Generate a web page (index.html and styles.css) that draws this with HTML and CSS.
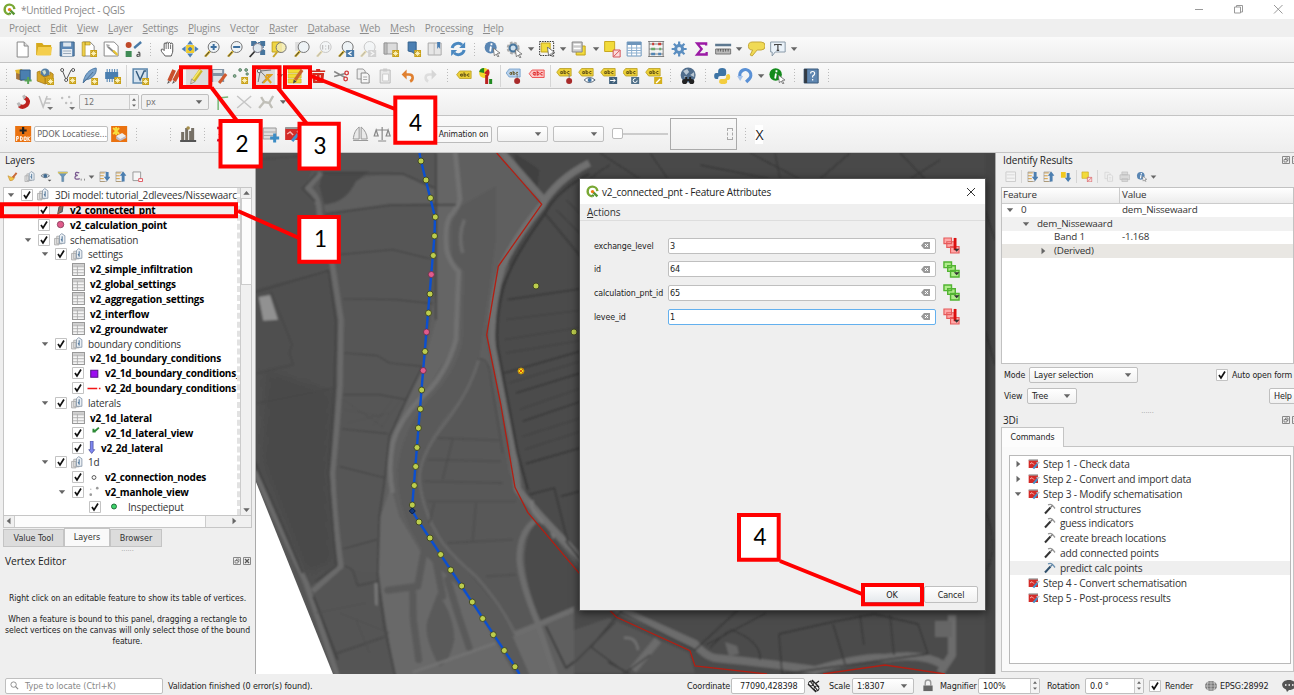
FILE: index.html
```html
<!DOCTYPE html>
<html lang="en">
<head>
<meta charset="utf-8">
<title>*Untitled Project - QGIS</title>
<link rel="stylesheet" href="styles.css">
</head>
<body>
<svg class="sprite" aria-hidden="true">
  <symbol id="qgis" viewBox="0 0 16 16"><path d="M14 7.500A6 6 0 1 0 8 14" fill="none" stroke="#79a834" stroke-width="3"/><path d="M8 14l1-2" stroke="#589632" stroke-width="3"/><path d="M8 8l6 6" stroke="#589632" stroke-width="3"/><circle cx="8" cy="8" r="2" fill="#ee7913"/></symbol>
  <symbol id="star" viewBox="0 0 6 6"><path d="M0 0h6v6H0z" fill="#c8a017"/><path d="M3 .8v4.400M.8 3h4.400M1.400 1.400l3.200 3.200M4.600 1.400L1.400 4.600" stroke="#fff6c4" stroke-width=".8"/></symbol>
  <symbol id="new" viewBox="0 0 18 18"><path d="M4 2h7l4 4v11H4z" fill="#fff" stroke="#888"/><path d="M11 2v4h4" fill="#ddd" stroke="#888"/></symbol>
  <symbol id="open" viewBox="0 0 18 18"><path d="M1 3h6l1.500 2H16v10H1z" fill="#d6a91c"/><path d="M3 7h14l-1.500 8.500H1.500z" fill="#f4ce4d"/></symbol>
  <symbol id="save" viewBox="0 0 18 18"><path d="M2 2h14v14H2z" fill="#5b87b5" stroke="#3f6488"/><path d="M5 2.500h8v4H5z" fill="#dde6ee"/><path d="M4 9h10v7H4z" fill="#e9eef3"/><path d="M5 11h8M5 13.500h8" stroke="#9ab"/></symbol>
  <symbol id="layout" viewBox="0 0 18 18"><path d="M3 2h7l4 4v10H3z" fill="#fff" stroke="#8b8b8b"/><path d="M2 2h3v14H2zM5 2h5v3H5z" fill="#efd04a" stroke="#a88a1b" stroke-width=".6"/><use href="#star" x="10" y="10" width="7" height="7"/></symbol>
  <symbol id="layman" viewBox="0 0 18 18"><path d="M2 2h10l4 4v10H2z" fill="#fff" stroke="#8b8b8b"/><path d="M6 7l8 7" stroke="#888" stroke-width="1.800"/><path d="M4 4l4 1-3 3z" fill="#aaa"/><path d="M10 11l5 5 1-2-4-4z" fill="#e6c231"/></symbol>
  <symbol id="style" viewBox="0 0 18 18"><circle cx="4.500" cy="5" r="3" fill="#c04a2a"/><path d="M1.500 11h6v6h-6z" fill="#3f8b55"/><path d="M10 8l7-6" stroke="#4a7ba8" stroke-width="2.400"/><path d="M13.700 12.500q2-1 2 1V16q-3 1-3-.5t3-1.500" fill="none" stroke="#555" stroke-width="1.200"/></symbol>
  <symbol id="hand" viewBox="0 0 18 18"><path d="M6 16c-2-3-4-4-4-6 0-1.500 2-1 3 .5V4c0-1.500 2-1.500 2 0 0-2.500 2.200-2.500 2.200 0 0-2 2.200-2 2.200 0 .4-1.500 2.200-1.200 2.200.5V11c0 2-1 3-1.500 5z" fill="#fff" stroke="#555"/><path d="M7 4v5M9.200 4v5M11.400 4.500V9" stroke="#555" stroke-width=".8"/></symbol>
  <symbol id="pansel" viewBox="0 0 18 18"><path d="M5 5h8v8H5z" fill="#eecb2f"/><path d="M9 .5l3 4H6zM9 17.500l3-4H6zM.5 9l4-3v6zM17.500 9l-4-3v6z" fill="#4a7fb5"/><path d="M8 7h2v4H8zM7 8h4v2H7z" fill="#4a7fb5"/></symbol>
  <symbol id="lens" viewBox="0 0 18 18"><path d="M7 11l-5 5.500" stroke="#d9b52c" stroke-width="2.500"/><path d="M6 12l-4 4.500" stroke="#333" stroke-width="1"/><circle cx="10.500" cy="7" r="5.500" fill="#eef3f6" stroke="#777"/></symbol>
  <symbol id="zin" viewBox="0 0 18 18"><use href="#lens"/><path d="M7.500 7h6M10.500 4v6" stroke="#3c6f9f" stroke-width="2"/></symbol>
  <symbol id="zout" viewBox="0 0 18 18"><use href="#lens"/><path d="M7 7h7" stroke="#3c6f9f" stroke-width="2"/></symbol>
  <symbol id="zfull" viewBox="0 0 18 18"><path d="M3 1h5v5H3zM12 1h5v5h-5zM12 10h5v5h-5z" fill="#47759d"/><path d="M4 2.500h12M15 3v9" fill="none" stroke="#47759d" stroke-width="1.200" stroke-dasharray="2 1"/><circle cx="9.500" cy="8" r="4.500" fill="#dfe8ee" stroke="#778"/><path d="M6.500 11.500l-5 5.500" stroke="#333" stroke-width="1.800"/></symbol>
  <symbol id="zsel" viewBox="0 0 18 18"><path d="M2 2h9v10H2z" fill="#f0d643" stroke="#c3a31c"/><path d="M7 12l-4 5" stroke="#c8a52a" stroke-width="2"/><circle cx="11" cy="7.500" r="5" fill="#f4ecad" fill-opacity=".85" stroke="#777"/></symbol>
  <symbol id="zlay" viewBox="0 0 18 18"><path d="M2 2h9v9H2z" fill="#ddd"/><use href="#lens"/></symbol>
  <symbol id="znat" viewBox="0 0 18 18"><g opacity=".35"><use href="#lens"/><path d="M7.500 5v4.500M10.500 5.500v1M10.500 8.500v1M13.500 5v4.500" stroke="#555" stroke-width="1.200"/></g></symbol>
  <symbol id="zlast" viewBox="0 0 18 18"><use href="#lens"/><path d="M9 10h8v7H9z" fill="#4a7ba8"/><path d="M14.500 11.500l-3 2 3 2" fill="none" stroke="#fff" stroke-width="1.300"/></symbol>
  <symbol id="znext" viewBox="0 0 18 18"><g opacity=".35"><use href="#lens"/><path d="M9 10h8v7H9z" fill="#999"/><path d="M11.500 11.500l3 2-3 2" fill="none" stroke="#fff" stroke-width="1.300"/></g></symbol>
  <symbol id="newmap" viewBox="0 0 18 18"><path d="M2 3h13v11H2z" fill="#dcdcdc" stroke="#999"/><path d="M2 3h3v11H2z" fill="#bbb" stroke="#888" stroke-width=".6"/><use href="#star" x="10" y="10" width="7" height="7"/></symbol>
  <symbol id="bookm" viewBox="0 0 18 18"><path d="M4 2h8v13l-4-3-4-1z" fill="#4b7fb3" stroke="#33618d"/><use href="#star" x="10" y="10" width="7" height="7"/></symbol>
  <symbol id="bookm2" viewBox="0 0 18 18"><path d="M2 3h13v12H2z" fill="#e6e6e6" stroke="#aaa"/><path d="M8 3v12" stroke="#bbb"/><path d="M11 2h3v7l-1.500-2L11 9z" fill="#4b7fb3"/></symbol>
  <symbol id="refresh" viewBox="0 0 18 18"><path d="M3 8a6 6 0 0 1 10-3M15 10a6 6 0 0 1-10 3" fill="none" stroke="#4a88c0" stroke-width="3"/><path d="M16 2v6h-6zM2 16v-6h6z" fill="#4a88c0"/></symbol>
  <symbol id="cursor" viewBox="0 0 8 8"><path d="M1 0l6 4.500-2.500.3L6 7.500l-1 .4-1.400-2.500L2 7z" fill="#fff" stroke="#666" stroke-width=".7"/></symbol>
  <symbol id="info" viewBox="0 0 18 18"><circle cx="7.500" cy="7.500" r="6" fill="#5a86b3"/><path d="M8.300 3.300v2M7.800 6.500l-.8 5" stroke="#fff" stroke-width="1.800"/><use href="#cursor" x="9" y="8" width="9" height="9"/></symbol>
  <symbol id="act" viewBox="0 0 18 18"><circle cx="8" cy="8" r="5.500" fill="#ccc" stroke="#aaa" stroke-width="2" stroke-dasharray="2.600 1.800"/><circle cx="8" cy="8" r="3.500" fill="#cfe0ee" stroke="#47759d" stroke-width="2"/><use href="#cursor" x="9" y="9" width="9" height="9"/></symbol>
  <symbol id="sel" viewBox="0 0 18 18"><path d="M1.500 1.500h14v14h-14z" fill="none" stroke="#333" stroke-dasharray="1.500 1"/><path d="M3 3h9v9H3z" fill="#f2db3b" stroke="#c3a31c"/><use href="#cursor" x="8" y="7" width="10" height="10"/></symbol>
  <symbol id="selform" viewBox="0 0 18 18"><path d="M6 6h9v9H6z" fill="#f2db3b" stroke="#c3a31c"/><path d="M2 2h10v10H2z" fill="#ccc" stroke="#888"/><path d="M3.500 4.500h7M3.500 8.500h7" stroke="#fff" stroke-width="1.600"/></symbol>
  <symbol id="desel" viewBox="0 0 18 18"><path d="M1.500 1.500h10v10h-10z" fill="#f2db3b" stroke="#c9a91f"/><path d="M10 10h7v7h-7z" fill="#fbdcdc" stroke="#d4555a"/><path d="M10.500 16.500l6-6" stroke="#d4555a"/></symbol>
  <symbol id="table" viewBox="0 0 18 18"><path d="M2 2h14v14H2z" fill="#fff" stroke="#6d95bb"/><path d="M2 2h14v3H2z" fill="#6d95bb"/><path d="M2 8h14M2 10.500h14M2 13h14M6.500 5v11M11.500 5v11" stroke="#8db0d0"/></symbol>
  <symbol id="abacus" viewBox="0 0 18 18"><path d="M2 1v16M16 1v16M2 4h14M2 9h14M2 14h14M1 16.500h16M1 1.500h16" stroke="#777" stroke-width=".9" fill="none"/><path d="M5 4h2M11 4h3" stroke="#cc3b34" stroke-width="2.500"/><path d="M4 9h4M12 9h2" stroke="#69a869" stroke-width="2.500"/><path d="M4 14h4M11 14h3" stroke="#4f84b3" stroke-width="2.500"/></symbol>
  <symbol id="gear" viewBox="0 0 18 18"><path d="M9 1.500v15M1.500 9h15M3.700 3.700l10.600 10.600M14.300 3.700L3.700 14.300" stroke="#5b8ec0" stroke-width="2.200"/><circle cx="9" cy="9" r="5" fill="#5b8ec0"/><circle cx="9" cy="9" r="2" fill="#e8eef4"/></symbol>
  <symbol id="sigma" viewBox="0 0 18 18"><path d="M14 5.500V3.500H5L9.500 9 5 14.500h9.500v-2.500" fill="none" stroke="#9b1aa5" stroke-width="2.300"/></symbol>
  <symbol id="ruler" viewBox="0 0 18 18"><path d="M1 5h16" stroke="#5d7890" stroke-width="2.500"/><path d="M1.500 9h15v5h-15z" fill="#bbb" stroke="#777"/><path d="M4 9v2.500M6.500 9v2.500M9 9v3M11.500 9v2.500M14 9v2.500" stroke="#444" stroke-width=".8"/></symbol>
  <symbol id="tips" viewBox="0 0 18 18"><path d="M5 2h9a3 3 0 0 1 0 8h-4l-5 6-2-1 2.500-5a4 4 0 0 1-.5-8z" fill="#f0da55" stroke="#c5a83c"/></symbol>
  <symbol id="textann" viewBox="0 0 18 18"><path d="M1.500 2h14.500v10H6l-3 4v-4H1.500z" fill="#eaf2f9" stroke="#8a9aa8"/><path d="M5.500 5.500v-1h6.500v1M8.750 4.500v6M7.500 10.300h2.500" fill="none" stroke="#444" stroke-width="1.200"/></symbol>
  <symbol id="dsm" viewBox="0 0 18 18"><path d="M1 3l7-1 1 7-6 1z" fill="#e5b82d"/><path d="M2 6l7 2-1 6-6-2z" fill="#a6743b"/><path d="M6 3h10v10H6z" fill="#4a7fb0" stroke="#325f8b"/><path d="M10.500 13.500h7M14 10v7" stroke="#58a456" stroke-width="2"/></symbol>
  <symbol id="gpkg" viewBox="0 0 18 18"><circle cx="9" cy="6" r="4.500" fill="#557fa5"/><path d="M6 4l3-1 1 3-2 2z" fill="#cfe0cc"/><path d="M1 5l3-1v3l4 3 6-2V5l3 2v7l-8 3-8-3z" fill="#d7a524" stroke="#a57a14" stroke-width=".8"/><path d="M9 11v6" stroke="#a57a14"/><use href="#star" x="11" y="11" width="7" height="7"/></symbol>
  <symbol id="shp" viewBox="0 0 18 18"><path d="M3 3l4 10 5-10h3" fill="none" stroke="#555"/><circle cx="3" cy="3" r="1.500" fill="#fff" stroke="#555"/><circle cx="7" cy="13" r="1.500" fill="#fff" stroke="#555"/><circle cx="14" cy="3" r="1.500" fill="#fff" stroke="#555"/><use href="#star" x="10" y="10" width="7" height="7"/></symbol>
  <symbol id="feather" viewBox="0 0 18 18"><path d="M2 16C3 8 8 2 15 1c1 6-4 11-11 12z" fill="#7ba4cc" stroke="#4d7ba8"/><path d="M2 16L12 5" stroke="#4d6f90"/><use href="#star" x="10" y="11" width="7" height="7"/></symbol>
  <symbol id="chip" viewBox="0 0 18 18"><path d="M2 5h13v7H2z" fill="#4a7fb0"/><path d="M4 2v13M6.500 2v13M9 2v13M11.500 2v13M14 2v9" stroke="#4a7fb0"/><use href="#star" x="11" y="10" width="7" height="7"/></symbol>
  <symbol id="virt" viewBox="0 0 18 18"><path d="M2 2h14v14H2z" fill="#d5e3ef" stroke="#5d88ad" stroke-width="1.500"/><path d="M5 4l4 9 4-9h2" fill="none" stroke="#365d80" stroke-width="1.500"/><use href="#star" x="11" y="11" width="7" height="7"/></symbol>
  <symbol id="pencils" viewBox="0 0 18 18"><path d="M4 14l5-11M9 14l6-11" stroke="#c9502d" stroke-width="4"/><path d="M2 17l1-3 2 1zM7 17l1-3 2 1z" fill="#555"/></symbol>
  <symbol id="pencil" viewBox="0 0 18 18"><path d="M5.500 13.500L13 3" stroke="#cdb729" stroke-width="4"/><path d="M5 12.500L12 3" stroke="#f6e869" stroke-width="1.500"/><path d="M2.500 17l.8-5 3.600 2.600z" fill="#e8d8b0" stroke="#777" stroke-width=".6"/></symbol>
  <symbol id="saveed" viewBox="0 0 18 18"><path d="M1 2h13v13H1z" fill="#8294a5"/><path d="M3 3h9v3H3zM3 9h9v6H3z" fill="#dfe3e7"/><path d="M9 16l7-9" stroke="#d0592e" stroke-width="3"/></symbol>
  <symbol id="addpt" viewBox="0 0 18 18"><g fill="#8fb69a" stroke="#4d7559" stroke-width=".8"><circle cx="2.500" cy="9" r="1.400"/><circle cx="8" cy="3" r="1.400"/><circle cx="14" cy="3" r="1.400"/><circle cx="15" cy="7" r="1.200"/></g><use href="#star" x="9" y="10" width="7" height="7"/></symbol>
  <symbol id="vertex" viewBox="0 0 18 18"><path d="M3 15L5 4l11-1M5 4l8 8" fill="none" stroke="#777"/><circle cx="4" cy="4" r="1.800" fill="#eee" stroke="#666"/><path d="M7 16l7-7" stroke="#777" stroke-width="1.500"/><path d="M10 9l6 7M11 8h5l-8 8" fill="none" stroke="#e0a31f" stroke-width="2"/></symbol>
  <symbol id="multi" viewBox="0 0 18 18"><path d="M1 2h13v4H1zM1 7h13v4H1zM1 12h13v4H1z" fill="#f2dc35" stroke="#c9ad22" stroke-width=".6"/><path d="M8 13l7-10" stroke="#c9662d" stroke-width="3.200"/><path d="M6 16.500l.5-4 3 2z" fill="#444"/></symbol>
  <symbol id="trash" viewBox="0 0 18 18"><path d="M3 6h12l-1 10H4zM2 3.500h14v1.500H2zM7 2h4v2H7z" fill="#d22d20"/><path d="M7 8v6M11 8v6" stroke="#fff"/></symbol>
  <symbol id="cut" viewBox="0 0 18 18"><path d="M2 4.500l11 6M2 9.500l11-3" stroke="#888" stroke-width="1.500"/><circle cx="14.500" cy="6" r="1.800" fill="none" stroke="#d33b3b" stroke-width="1.300"/><circle cx="13.500" cy="12" r="1.800" fill="none" stroke="#d33b3b" stroke-width="1.300"/></symbol>
  <symbol id="copy" viewBox="0 0 18 18"><path d="M3 2h6l2 2v8H3z" fill="#eee" stroke="#999"/><path d="M7 6h6l2 2v8H7z" fill="#f6f6f6" stroke="#888"/><path d="M9 10h4M9 12.500h4" stroke="#aaa"/></symbol>
  <symbol id="paste" viewBox="0 0 18 18"><path d="M4 3h10v13H4z" fill="#e9e9e9" stroke="#bbb"/><path d="M7 1.500h4v3H7z" fill="#ccc"/><path d="M6.500 7h6v7h-6z" fill="#fafafa" stroke="#ccc"/></symbol>
  <symbol id="undo" viewBox="0 0 18 18"><path d="M6 7.500h4c4.500 0 4.500 5 1 7" fill="none" stroke="#e08030" stroke-width="2.600"/><path d="M7.500 2.500v10L2.500 7.500z" fill="#e08030"/></symbol>
  <symbol id="redo" viewBox="0 0 18 18"><path d="M12 7.500H8c-4.500 0-4.500 5-1 7" fill="none" stroke="#ddd" stroke-width="2.600"/><path d="M10.500 2.500v10l5-5z" fill="#d6d6d6"/></symbol>
  <symbol id="abc" viewBox="0 0 12 6"><path d="M3 2v3M3 2.600Q.8 1.500.8 3.500T3 4.500M5 .3V5M5 2.600q2.300-1 2.300 1T5 4.500M11.200 2.300q-2.300-.8-2.300 1.200t2.300 1.200" fill="none" stroke="#5d4d16" stroke-width="1.100"/></symbol>
  <symbol id="tag" viewBox="0 0 18 18"><path d="M4.500 4H16v7.500H4.500L1.500 7.700z" fill="#ecd038" stroke="#b79d20" stroke-width=".8"/><use href="#abc" x="4.500" y="5" width="10.500" height="5.300"/></symbol>
  <symbol id="tagtop" viewBox="0 0 18 18"><use href="#tag" y="-2.500" x="-1"/></symbol>
  <symbol id="diag" viewBox="0 0 18 18"><circle cx="7" cy="6" r="5" fill="#f1d72b"/><path d="M7 6V1a5 5 0 0 0-5 4z" fill="#21881f"/><path d="M7 6l4-4a5 5 0 0 1 0 7z" fill="#c52222"/><path d="M8 8h3v9H8z" fill="#bb2020"/><path d="M12 12h3v5h-3z" fill="#228a22"/></symbol>
  <symbol id="tagb" viewBox="0 0 18 18"><path d="M4 2h11v8H4L1 6z" fill="#b7d1ec" stroke="#6f9cca" stroke-width=".8"/><use href="#abc" x="4" y="3.500" width="9.500" height="5"/><path d="M12 7v6" stroke="#888"/><circle cx="12" cy="14" r="3" fill="#a82a2a"/></symbol>
  <symbol id="tagr" viewBox="0 0 18 18"><path d="M4 3h12v7.500H4L1 6.700z" fill="#fbc6c6" stroke="#e33" stroke-width=".8"/><path d="M7 5v3.500M7 5.500q-2-.8-2 1t2 1.500M9 3.800v4.700M9 5.500q2-.8 2 1T9 8M14.500 5.500q-2-.6-2 1.200t2 1.300" fill="none" stroke="#d22"/></symbol>
  <symbol id="tagpin" viewBox="0 0 18 18"><use href="#tagtop"/><path d="M13 7v6" stroke="#888"/><circle cx="13" cy="14" r="3" fill="#a82a2a"/></symbol>
  <symbol id="tageye" viewBox="0 0 18 18"><use href="#tagtop"/><path d="M6 13q5-5 11 0q-6 5-11 0z" fill="#fff" stroke="#567"/><circle cx="11.500" cy="13" r="2" fill="#3f73a4"/></symbol>
  <symbol id="tagmove" viewBox="0 0 18 18"><use href="#tagtop"/><path d="M9 10h8v7H9z" fill="#3f5f7a"/><path d="M10 13.500h5M13 11.500l2 2-2 2" stroke="#fff" fill="none"/></symbol>
  <symbol id="tagrot" viewBox="0 0 18 18"><use href="#tagtop"/><path d="M9 10h8v7H9z" fill="#4f6f88"/><circle cx="13" cy="13.500" r="2" fill="none" stroke="#fff" stroke-dasharray="9 3"/></symbol>
  <symbol id="taged" viewBox="0 0 18 18"><use href="#tagtop"/><path d="M9 10h8v7H9z" fill="#d4b01d"/><path d="M11 16l4-4" stroke="#fff" stroke-width="1.500"/></symbol>
  <symbol id="globe" viewBox="0 0 18 18"><circle cx="9" cy="8" r="7.500" fill="#506d8c"/><path d="M4 4l4-2 2 3-3 3zM11 8l4-3v5zM5 9l3 1-2 2z" fill="#b8c6d2"/><circle cx="5.500" cy="14.500" r="2.600" fill="#222"/><circle cx="12.500" cy="14.500" r="2.600" fill="#222"/><path d="M6 10h2v4H6zM10 10h2v4h-2zM7 12h4v2H7z" fill="#222"/></symbol>
  <symbol id="python" viewBox="0 0 18 18"><path d="M5 8V4q0-3 4-3t4 3v3q0 2-2 2H7q-2 0-2 2v1H3Q1 12 1 9t2-3h6" fill="#3d74a5"/><path d="M13 8v2q0 2-2 2H8q-2 0-2 2v1q0 2 4 2t4-2v-2h1q2 0 2-3t-2-3z" fill="#f3cd3f"/></symbol>
  <symbol id="reload" viewBox="0 0 18 18"><path d="M4 10A5.500 5.500 0 1 1 13 12l-3 3" fill="none" stroke="#5a91d6" stroke-width="3.200"/><path d="M7 9L1 9l3 5z" fill="#a5c2ea"/></symbol>
  <symbol id="greeni" viewBox="0 0 18 18"><circle cx="7.500" cy="7.500" r="6.200" fill="#138a1b"/><path d="M8.300 3.300v2M7.800 6.500l-.8 5" stroke="#fff" stroke-width="1.800"/><use href="#cursor" x="9" y="8" width="9" height="9"/></symbol>
  <symbol id="help" viewBox="0 0 18 18"><path d="M2 2h14v14H2z" fill="#5f86b0" stroke="#3a5a7c"/><path d="M2 2h3v14H2z" fill="#333b44"/><path d="M8.500 6.500q0-2 2-2t2 2q0 1.500-2 2.500v1.500M10.500 12v1.500" fill="none" stroke="#fff" stroke-width="1.200"/></symbol>
  <symbol id="magnet" viewBox="0 0 18 18"><path d="M5 12.500q3.500 3 7.500-.5 3.500-4.500-2-7.500" fill="none" stroke="#bd2320" stroke-width="4"/><path d="M2.500 10.500l2.500-1.500 2 3-2.500 2zM8 3l2.500-1.500 1.500 3-2.500 2z" fill="#b9b9b9"/></symbol>
  <symbol id="snapv" viewBox="0 0 18 18"><path d="M3 3l4 11 4-11M9 6h6M9 10h5" fill="none" stroke="#c2c2c2" stroke-width="1.500"/><path d="M11 14h6l-3 3z" fill="#777"/></symbol>
  <symbol id="snapp" viewBox="0 0 18 18"><g fill="#c0c0c0"><circle cx="3" cy="5" r="1.200"/><circle cx="7" cy="10" r="1.200"/><circle cx="10" cy="4" r="1.200"/><circle cx="12" cy="10" r="1.200"/></g><path d="M10 14h6l-3 3z" fill="#777"/></symbol>
  <symbol id="topo" viewBox="0 0 18 18"><path d="M5 17V4M5 5l10-1" stroke="#76b877" stroke-width="1.500"/><path d="M2 2l4 4" stroke="#bbb"/></symbol>
  <symbol id="cross" viewBox="0 0 18 18"><path d="M2 3l14 12M16 3L2 15" stroke="#c6c6c6" stroke-width="1.500"/></symbol>
  <symbol id="trace" viewBox="0 0 18 18"><path d="M2 15l5-6-3-5M7 9l5 1 4-7M12 10l3 5" fill="none" stroke="#c0bfb8" stroke-width="2.400"/></symbol>
  <symbol id="pdok" viewBox="0 0 18 18"><path d="M1 1h16v16H1z" fill="#ea7210"/><path d="M9 2v7M5.500 5.500h7" stroke="#222" stroke-width="2.200"/><path d="M2.500 16v-4.500h1.600v2.300H2.800M6.300 11.500v4q2 0 2-2t-2-2M10 12h2v3.500h-2zM13.800 11.500V16M16 11.500l-2 2.200 2 2.300" fill="none" stroke="#fff"/></symbol>
  <symbol id="pdok2" viewBox="0 0 18 18"><path d="M1 1h16v16H1z" fill="#ea7210"/><path d="M3 3l6 6M9 3L3 9M6 2v8" stroke="#f9df3d" stroke-width="1.800"/><path d="M6 11l6-3 4 3-6 4z" fill="#eee"/><path d="M6 11v3l4 2 6-3v-2l-6 3z" fill="#bbc"/></symbol>
  <symbol id="city" viewBox="0 0 18 18"><path d="M2 16V7h3v9M6 16V3h3v13M10 16V6h2V3h3v13z" fill="#767066"/><path d="M1 16h16" stroke="#555" stroke-width="2"/><circle cx="9" cy="3" r="1.800" fill="#a58e4a"/></symbol>
  <symbol id="three" viewBox="0 0 18 18"><path d="M4 3h4q4 0 2.500 4L8 9q5 1 2 5-2 2-6 1" fill="none" stroke="#cf1238" stroke-width="2.600"/></symbol>
  <symbol id="addt" viewBox="0 0 18 18"><path d="M1 3h13v11H1z" fill="#ddd" stroke="#999"/><path d="M1 7h13M1 10.500h13" stroke="#aaa"/><path d="M8 13h9M12.500 8.500v9" stroke="#3b8cc5" stroke-width="3"/></symbol>
  <symbol id="tbox" viewBox="0 0 18 18"><path d="M1 3h14v12H1z" fill="#d32b28"/><path d="M1 2h14v2H1z" fill="#999"/><path d="M3 9l3-2 3 3" stroke="#f8b5b2" fill="none" stroke-width="1.500"/><path d="M8 16l6-7" stroke="#4591c9" stroke-width="3"/><path d="M13 6l2 2 2-2" fill="none" stroke="#b9c4cc" stroke-width="1.800"/></symbol>
  <symbol id="sail" viewBox="0 0 18 18"><path d="M8 2C3 6 3 10 2 14h6zM10 2v12h6c0-4-2-9-6-12zM2 15.500h15" fill="#e9e9e9" stroke="#999"/></symbol>
  <symbol id="scales" viewBox="0 0 18 18"><path d="M9 2v13M5 16h8M3 5h12M3 5l-2 6h4zM15 5l-2 6h4z" fill="#eee" stroke="#888" stroke-width="1.200"/></symbol>
  <symbol id="group" viewBox="0 0 12 12"><path d="M1 5h4v6H1zM3 3h5v7H3z" fill="#e4e4e4" stroke="#aaa" stroke-width=".8"/><path d="M5.500 2.500l2-2 3 2v7h-5z" fill="#edf1f5" stroke="#8496a8" stroke-width=".8"/><path d="M8 3v5M7 5.500l1 2" stroke="#567b9e"/></symbol>
  <symbol id="tbl" viewBox="0 0 12 12"><path d="M.5.500h11v11H.5z" fill="#f5f5f5" stroke="#999"/><path d="M1 1h10v2H1z" fill="#ccc"/><path d="M1 3.500h10M1 6.200h10M1 9h10M5 3v8" stroke="#aaa" stroke-width=".8"/></symbol>
  <symbol id="chk" viewBox="0 0 12 12"><path d="M.5.500h11v11H.5z" fill="#fff" stroke="#c3c3c3"/><path d="M3 6l2 3 4-6.500" fill="none" stroke="#111" stroke-width="1.700"/></symbol>
  <symbol id="dn" viewBox="0 0 8 8"><path d="M.8 2.200h6.400L4 6z" fill="#666"/></symbol>
  <symbol id="rt" viewBox="0 0 8 8"><path d="M2.500.8v6.400L6.300 4z" fill="#666"/></symbol>
  <symbol id="up" viewBox="0 0 8 8"><path d="M.8 5.800h6.400L4 2z" fill="#666"/></symbol>
  <symbol id="brush" viewBox="0 0 12 12"><path d="M1 5q4 3 6 0l1 2q-2 4-5 3z" fill="#f0c648" stroke="#c78a2a" stroke-width=".6"/><path d="M6 7l4-5" stroke="#c96a3b" stroke-width="2"/></symbol>
  <symbol id="eye" viewBox="0 0 12 12"><path d="M1 5q4.500-4 9 0q-4.500 4-9 0z" fill="#dfe6ec" stroke="#78828c"/><circle cx="5.500" cy="5" r="2" fill="#3f6a91"/><path d="M8 9h4l-2 2z" fill="#555"/></symbol>
  <symbol id="funnel" viewBox="0 0 12 12"><path d="M1 1h10L7 6v5H5V6z" fill="#6b97bd" stroke="#4e7592" stroke-width=".5"/><path d="M1 1h10v1.500H1z" fill="#d9c35c"/></symbol>
  <symbol id="eps" viewBox="0 0 12 12"><path d="M5.500 2Q1.500.5 1.500 3q0 1.500 2.500 1.500Q1 4.500 1 7q0 2.500 5 1" fill="none" stroke="#79588f" stroke-width="1.300"/><path d="M7.500 8v2M11 8v2" stroke="#888"/></symbol>
  <symbol id="exp" viewBox="0 0 12 12"><path d="M1 2h5M1 5h4M1 8h4M1 11h5" stroke="#d49a35"/><path d="M1 1h7v10H1z" fill="none" stroke="#999" stroke-width=".7"/><path d="M7 1h3v5h2l-3.500 4.500L5 6h2z" fill="#4c7fb0"/></symbol>
  <symbol id="col" viewBox="0 0 12 12"><path d="M1 2h5M1 5h4M1 8h4M1 11h5" stroke="#d49a35"/><path d="M1 1h7v10H1z" fill="none" stroke="#999" stroke-width=".7"/><path d="M7 11h3V5h2L8.500.5 5 5h2z" fill="#4c7fb0"/></symbol>
  <symbol id="ynew" viewBox="0 0 12 12"><path d="M1 1h5v6H1z" fill="#f0c820"/><path d="M7 2h3v5h2l-3.500 4.500L5 7h2z" fill="#4c7fb0"/></symbol>
  <symbol id="rem" viewBox="0 0 12 12"><path d="M1 1h8v9H1z" fill="#f6f6f6" stroke="#999"/><path d="M7 8h4v3H7z" fill="#fff" stroke="#e0555f"/></symbol>
  <symbol id="form" viewBox="0 0 12 12"><path d="M1 1h10v10H1z" fill="#f3f3f3" stroke="#ccc"/><path d="M2 4h8M2 7.500h8" stroke="#d6d6d6"/></symbol>
  <symbol id="print" viewBox="0 0 12 12"><path d="M1 4h10v5H1zM3 1h6v3H3zM3 8h6v3H3z" fill="#d9d9d9" stroke="#bbb" stroke-width=".7"/></symbol>
  <symbol id="hammer" viewBox="0 0 12 12"><path d="M1 10.500L6.500 4.500" stroke="#333" stroke-width="2"/><path d="M4 1.800Q7.500.5 9 3l2 2.500" fill="none" stroke="#999" stroke-width="1.300"/><path d="M6.500 4.500L8.500 2.500" stroke="#777" stroke-width="1.500"/></symbol>
  <symbol id="hammerb" viewBox="0 0 12 12"><path d="M1 10.500L6.500 4.500" stroke="#2f4f6b" stroke-width="2"/><path d="M4 1.800Q7.500.5 9 3l2 2.500" fill="none" stroke="#6b90b0" stroke-width="1.300"/><path d="M6.500 4.500L8.500 2.500" stroke="#5b80a0" stroke-width="1.500"/></symbol>
  <symbol id="flt" viewBox="0 0 8 8"><path d="M.5.500h7v7h-7z" fill="#eee" stroke="#888"/><path d="M2 3.500h3v2.500H2zM3.500 3.500V2H6v2.500H5" fill="none" stroke="#666" stroke-width=".7"/></symbol>
  <symbol id="cls" viewBox="0 0 8 8"><path d="M.5.500h7v7h-7z" fill="#eee" stroke="#888"/><path d="M2 2l4 4M6 2L2 6" stroke="#555" stroke-width="1.200"/></symbol>
  <symbol id="bksp" viewBox="0 0 9 7"><path d="M3 0h6v7H3L0 3.500z" fill="#999"/><path d="M4 2l3 3M7 2L4 5" stroke="#fff"/></symbol>
  <symbol id="wred" viewBox="0 0 18 18"><path d="M1 1h8v6H1zM4 5h8v6H4zM8 10h9v7H8z" fill="#ffa9a9" stroke="#e65a5a" stroke-width="1.200"/><path d="M12.800 1v13" stroke="#dc1010" stroke-width="3"/><path d="M11.500 12.500h6l-3 3z" fill="#333"/></symbol>
  <symbol id="wgreen" viewBox="0 0 18 18"><path d="M1 1h8v6H1zM5 5h8v6H5zM8 10h9v7H8z" fill="#b0ec8c" stroke="#52b432" stroke-width="1.500"/><path d="M11.500 12h6l-3 3z" fill="#333"/></symbol>
</svg>

<div class="app">
  <header class="titlebar">
    <svg class="logo"><use href="#qgis"/></svg><span class="title">*Untitled Project - QGIS</span>
    <svg class="winctl" viewBox="0 0 100 20"><path d="M10 9.500h8M49.500 7h6v6h-6zM51.500 7V5.500h6V12h-2M89 5l8.500 8.500M97.500 5L89 13.500" fill="none" stroke="#999"/></svg>
  </header>
  <nav class="menubar"><span>Pro<u>j</u>ect</span><span><u>E</u>dit</span><span><u>V</u>iew</span><span><u>L</u>ayer</span><span><u>S</u>ettings</span><span><u>P</u>lugins</span><span>Vect<u>o</u>r</span><span><u>R</u>aster</span><span><u>D</u>atabase</span><span><u>W</u>eb</span><span><u>M</u>esh</span><span>Pro<u>c</u>essing</span><span><u>H</u>elp</span></nav>

  <div class="toolbar t1">
    <svg class="i"><use href="#new"/></svg><svg class="i"><use href="#open"/></svg><svg class="i"><use href="#save"/></svg><svg class="i"><use href="#layout"/></svg><svg class="i"><use href="#layman"/></svg><svg class="i"><use href="#style"/></svg><i class="grip"></i>
    <svg class="i"><use href="#hand"/></svg><svg class="i"><use href="#pansel"/></svg><svg class="i"><use href="#zin"/></svg><svg class="i"><use href="#zout"/></svg><svg class="i"><use href="#zfull"/></svg><svg class="i"><use href="#zsel"/></svg><svg class="i"><use href="#zlay"/></svg><svg class="i"><use href="#znat"/></svg><svg class="i"><use href="#zlast"/></svg><svg class="i"><use href="#znext"/></svg><svg class="i"><use href="#newmap"/></svg><svg class="i"><use href="#bookm"/></svg><svg class="i"><use href="#bookm2"/></svg><svg class="i"><use href="#refresh"/></svg><i class="grip"></i>
    <svg class="i"><use href="#info"/></svg><svg class="i"><use href="#act"/></svg><svg class="dd"><use href="#dn"/></svg><svg class="i"><use href="#sel"/></svg><svg class="dd"><use href="#dn"/></svg><svg class="i"><use href="#selform"/></svg><svg class="dd"><use href="#dn"/></svg><svg class="i"><use href="#desel"/></svg><svg class="i"><use href="#table"/></svg><svg class="i"><use href="#abacus"/></svg><svg class="i"><use href="#gear"/></svg><svg class="i"><use href="#sigma"/></svg><svg class="i"><use href="#ruler"/></svg><svg class="dd"><use href="#dn"/></svg><svg class="i"><use href="#tips"/></svg><svg class="i"><use href="#textann"/></svg><svg class="dd"><use href="#dn"/></svg>
  </div>

  <div class="toolbar t2">
    <i class="grip first"></i><svg class="i"><use href="#dsm"/></svg><svg class="i"><use href="#gpkg"/></svg><svg class="i"><use href="#shp"/></svg><svg class="i"><use href="#feather"/></svg><svg class="i"><use href="#chip"/></svg><i class="sep"></i><svg class="i"><use href="#virt"/></svg><i class="grip"></i>
    <svg class="i"><use href="#pencils"/></svg><svg class="i on"><use href="#pencil"/></svg><svg class="i"><use href="#saveed"/></svg><svg class="i"><use href="#addpt"/></svg><svg class="i on"><use href="#vertex"/></svg><svg class="dd"><use href="#dn"/></svg><svg class="i"><use href="#multi"/></svg><svg class="i"><use href="#trash"/></svg><svg class="i"><use href="#cut"/></svg><svg class="i"><use href="#copy"/></svg><svg class="i"><use href="#paste"/></svg><svg class="i"><use href="#undo"/></svg><svg class="i"><use href="#redo"/></svg><i class="grip"></i>
    <svg class="i"><use href="#tag"/></svg><svg class="i"><use href="#diag"/></svg><i class="sep"></i><svg class="i"><use href="#tagb"/></svg><svg class="i"><use href="#tagr"/></svg><i class="sep"></i><svg class="i"><use href="#tagpin"/></svg><svg class="i"><use href="#tageye"/></svg><svg class="i"><use href="#tagmove"/></svg><svg class="i"><use href="#tagrot"/></svg><svg class="i"><use href="#taged"/></svg><i class="grip"></i>
    <svg class="i"><use href="#globe"/></svg><i class="grip"></i><svg class="i"><use href="#python"/></svg><svg class="i"><use href="#reload"/></svg><svg class="dd"><use href="#dn"/></svg><svg class="i"><use href="#greeni"/></svg><i class="grip"></i><svg class="i"><use href="#help"/></svg><i class="grip"></i>
  </div>

  <div class="toolbar t3">
    <i class="grip first"></i><svg class="i"><use href="#magnet"/></svg><svg class="i"><use href="#snapv"/></svg><svg class="i"><use href="#snapp"/></svg>
    <div class="spin dim w60">12<b><svg><use href="#up"/></svg><svg><use href="#dn"/></svg></b></div><div class="combo dim w68">px<svg><use href="#dn"/></svg></div>
    <svg class="i"><use href="#topo"/></svg><svg class="i"><use href="#cross"/></svg><svg class="i"><use href="#trace"/></svg><svg class="dd"><use href="#dn"/></svg>
  </div>

  <div class="toolbar t4">
    <i class="grip first"></i><svg class="i"><use href="#pdok"/></svg><div class="field pdok">PDOK Locatiese...</div><svg class="i"><use href="#pdok2"/></svg><i class="grip"></i><span class="gap22"></span><i class="grip"></i><svg class="i"><use href="#city"/></svg><i class="grip"></i><svg class="i"><use href="#three"/></svg><span class="gap28"></span><svg class="i"><use href="#addt"/></svg><svg class="i"><use href="#tbox"/></svg><span class="gap44"></span><svg class="i"><use href="#sail"/></svg><svg class="i"><use href="#scales"/></svg>
    <div class="anim">Animation on</div><div class="combo c50"><svg><use href="#dn"/></svg></div><div class="combo c50"><svg><use href="#dn"/></svg></div>
    <div class="slider"><i></i></div><div class="lcd"><i></i></div><i class="grip"></i><span class="bigx">X</span>
  </div>

  <main class="work">
    <aside class="left">
      <h2>Layers</h2>
      <div class="mini"><svg><use href="#brush"/></svg><svg><use href="#group"/></svg><svg><use href="#eye"/></svg><svg><use href="#funnel"/></svg><svg><use href="#eps"/></svg><svg class="s"><use href="#dn"/></svg><svg><use href="#exp"/></svg><svg><use href="#col"/></svg><svg><use href="#rem"/></svg></div>
      <div class="tree">
        <div class="rows">
          <div class="r l0"><svg class="a"><use href="#dn"/></svg><svg class="c"><use href="#chk"/></svg><svg class="g"><use href="#group"/></svg><span>3Di model: tutorial_2dlevees/Nissewaarc</span></div>
          <div class="r l1 cur"><i class="a"></i><svg class="c"><use href="#chk"/></svg><svg class="g" viewBox="0 0 12 12"><path d="M4 10L5 4l4-3-1 7z" fill="#777" stroke="#555"/><path d="M4 10l4-7" stroke="#a5654b"/></svg><b><u>v2_connected_pnt</u></b></div>
          <div class="r l1"><i class="a"></i><svg class="c"><use href="#chk"/></svg><svg class="g" viewBox="0 0 12 12"><circle cx="6.500" cy="6" r="3" fill="#e05b8b" stroke="#7b3450" stroke-width=".7"/></svg><b>v2_calculation_point</b></div>
          <div class="r l1"><svg class="a"><use href="#dn"/></svg><svg class="c"><use href="#chk"/></svg><svg class="g"><use href="#group"/></svg><span>schematisation</span></div>
          <div class="r l2"><svg class="a"><use href="#dn"/></svg><svg class="c"><use href="#chk"/></svg><svg class="g"><use href="#group"/></svg><span>settings</span></div>
          <div class="r l3"><i class="a"></i><svg class="t"><use href="#tbl"/></svg><b>v2_simple_infiltration</b></div>
          <div class="r l3"><i class="a"></i><svg class="t"><use href="#tbl"/></svg><b>v2_global_settings</b></div>
          <div class="r l3"><i class="a"></i><svg class="t"><use href="#tbl"/></svg><b>v2_aggregation_settings</b></div>
          <div class="r l3"><i class="a"></i><svg class="t"><use href="#tbl"/></svg><b>v2_interflow</b></div>
          <div class="r l3"><i class="a"></i><svg class="t"><use href="#tbl"/></svg><b>v2_groundwater</b></div>
          <div class="r l2"><svg class="a"><use href="#dn"/></svg><svg class="c"><use href="#chk"/></svg><svg class="g"><use href="#group"/></svg><span>boundary conditions</span></div>
          <div class="r l3"><i class="a"></i><svg class="t"><use href="#tbl"/></svg><b>v2_1d_boundary_conditions</b></div>
          <div class="r l3"><i class="a"></i><svg class="c"><use href="#chk"/></svg><svg class="g" viewBox="0 0 12 12"><path d="M3 3h6.500v6.500H3z" fill="#9b0cf0" stroke="#56108a"/></svg><b>v2_1d_boundary_conditions_</b></div>
          <div class="r l3"><i class="a"></i><svg class="c"><use href="#chk"/></svg><svg class="g" viewBox="0 0 12 12"><path d="M0 6h9M10.500 6h1.500" stroke="#f21616" stroke-width="1.500"/></svg><b>v2_2d_boundary_conditions</b></div>
          <div class="r l2"><svg class="a"><use href="#dn"/></svg><svg class="c"><use href="#chk"/></svg><svg class="g"><use href="#group"/></svg><span>laterals</span></div>
          <div class="r l3"><i class="a"></i><svg class="t"><use href="#tbl"/></svg><b>v2_1d_lateral</b></div>
          <div class="r l3"><i class="a"></i><svg class="c"><use href="#chk"/></svg><svg class="g" viewBox="0 0 12 12"><path d="M5.500 2.500l0 2.500h2M6.500 5l4-3.500" fill="none" stroke="#2d8a35" stroke-width="1.800"/></svg><b>v2_1d_lateral_view</b></div>
          <div class="r l3 near"><i class="a"></i><svg class="c"><use href="#chk"/></svg><svg class="g" viewBox="0 0 12 12"><path d="M4.500 0h2.500v8h1.500l-2.800 3.500L3 8h1.500z" fill="#7f88f2" stroke="#4a4f9e" stroke-width=".7"/></svg><b>v2_2d_lateral</b></div>
          <div class="r l2"><svg class="a"><use href="#dn"/></svg><svg class="c"><use href="#chk"/></svg><svg class="g"><use href="#group"/></svg><span>1d</span></div>
          <div class="r l3"><i class="a"></i><svg class="c"><use href="#chk"/></svg><svg class="g" viewBox="0 0 12 12"><circle cx="6" cy="6" r="1.800" fill="#fff" stroke="#555" stroke-width=".9"/></svg><b>v2_connection_nodes</b></div>
          <div class="r l3"><svg class="a"><use href="#dn"/></svg><svg class="c"><use href="#chk"/></svg><svg class="g" viewBox="0 0 12 12"><circle cx="3" cy="8" r="1.200" fill="#999"/><circle cx="9" cy="2" r="1.200" fill="#999"/><circle cx="3" cy="3" r=".7" fill="#bbb"/></svg><b>v2_manhole_view</b></div>
          <div class="r l4"><i class="a"></i><svg class="c"><use href="#chk"/></svg><svg class="g wide" viewBox="0 0 12 12"><circle cx="6" cy="6" r="2.300" fill="#3fd36c" stroke="#1d6a35" stroke-width=".9"/></svg><span>Inspectieput</span></div>
        </div>
        <div class="vscroll"><svg><use href="#up"/></svg><i></i><svg><use href="#dn"/></svg></div>
      </div>
      <div class="hscroll"><svg class="flip"><use href="#rt"/></svg><i></i><svg><use href="#rt"/></svg><s></s></div>
      <div class="tabs"><span class="t-a">Value Tool</span><span class="t-b sel">Layers</span><span class="t-c">Browser</span></div>
      <div class="dots">······</div>
      <h2 class="ve">Vertex Editor<svg><use href="#flt"/></svg><svg><use href="#cls"/></svg></h2>
      <div class="vtext"><p>Right click on an editable feature to show its table of vertices.</p><p>When a feature is bound to this panel, dragging a rectangle to<br>select vertices on the canvas will only select those of the bound<br>feature.</p></div>
    </aside>

    <div class="map">
      <svg class="terrain" viewBox="256 153 739 521">
        <defs>
          <filter id="soft" x="0" y="0" width="1" height="1"><feGaussianBlur stdDeviation=".8"/></filter>
          <filter id="haze" x="-.2" y="-.2" width="1.400" height="1.400"><feGaussianBlur stdDeviation="14"/></filter>
        </defs>
        <g filter="url(#soft)" fill="none" stroke-linejoin="round">
          <path d="M250 145h755v540H250z" fill="#575757"/>
          <path d="M500 145h505v540H540z" fill="#4a4a4a"/>
          <g transform="translate(256 153) scale(.33333)">
            <path d="M-20-20H190L150 105 190 180 230 340-20 420z" fill="#515151"/>
            <path d="M-20 415L220 350 245 500 240 700 225 960 245 1240 165 1300-20 960z" fill="#505050"/>
            <path d="M30 650L230 720 215 960 230 1230 150 1260 20 930z" fill="#484848" filter="url(#haze)"/>
            <path d="M165 1310L255 1250 365 1260 420 1586H225z" fill="#555"/>
            <path d="M200 55H340Q300 80 280 120 260 155 205 155L190 100z" fill="#484848"/>
            <path d="M205 155Q270 150 300 85 330 60 440 65L535 105V150L400 155 210 185z" fill="#5e5e5e"/>
            <path d="M540-20H725L855 155 725 340 690 545 775 1000 990 1260V1586H420L365 1250 370 1100 400 850 500 640 540 400 545 190z" fill="#5e5e5e"/>
            <path d="M540-20H600L615 150 570 220 575 300 610 360 605 560 520 700 430 800 500 640 540 500 545 190z" fill="#656565"/>
            <path d="M615 160L590 210 590 320 625 355 620 570Q600 660 520 740 440 830 425 950 425 1080 500 1190 600 1330 700 1450L780 1586H870L775 1440Q700 1300 600 1220 500 1120 490 980 490 900 560 800 650 700 668 620L700 400 720 250V100z" fill="#5a5a5a"/>
            <path d="M670 620Q640 720 560 820 490 910 490 980 500 1080 560 1170L780 1430 840 1410 790 1220 830 1100 760 960 700 640z" fill="#585858"/>
            <path d="M405 1000L370 1100 365 1260 420 1586H790L640 1330 490 1190 430 1090z" fill="#696969"/>
            <path d="M770 1450L850 1420 905 1586H830z" fill="#6a6a6a"/>
            <path d="M505 1190L485 1300 395 1312M470 1310L472 1400 488 1520M535 1200L560 1330M575 1280L605 1380 640 1485" stroke="#5a5a5a" stroke-width="21" stroke-linecap="round"/>
            <path d="M545 1320Q595 1390 595 1460 580 1530 550 1540 500 1450 515 1400z" fill="#5a5a5a"/>
            <path d="M470 1558L720 1470" stroke="#727272" stroke-width="9"/>
            <path d="M597-10L612 140Q605 165 582 190 565 220 572 290 580 330 608 355L600 560Q570 670 490 740 430 800 410 870 395 950 410 1020" stroke="#717171" stroke-width="15"/>
            <path d="M625 200Q605 250 620 300" stroke="#6c6c6c" stroke-width="11"/>
            <path d="M668 620Q640 720 560 820 490 910 490 980 500 1080 560 1170 600 1220 660 1270 740 1360 775 1440" stroke="#686868" stroke-width="8"/>
            <path d="M195 60L155 105Q190 130 190 180L230 340 255 500 252 700Q240 860 230 960 235 1100 255 1240L170 1315M-5 955L150 1290 250 1586" stroke="#6a6a6a" stroke-width="16"/>
            <path d="M-15 900L140 1260M172 1330L245 1520" stroke="#404040" stroke-width="6"/>
            <path d="M183 60L140 106 178 145M-5 418L218 352 240 510 235 700 218 960 240 1240 180 1285M208 183L400 157 600 155M205 60L440 62 535 105M540 0V500M500 640L455 730 400 850 385 990 370 1090 365 1260 385 1420 418 1570" stroke="#434343" stroke-width="6" opacity=".85"/>
            <path d="M0 20L130 10M250 305L410 290 525 318M262 438L420 440 530 452M265 600L365 608 400 630 500 640M262 725L370 725 450 740M258 828L395 842M250 940L388 975M260 1188L362 1160M265 1238L290 1250 305 1298 365 1285M45 415L108 575 100 600 112 635 0 662M0 752L240 705M240 1502L385 1452" stroke="#454545" stroke-width="5" opacity=".75"/>
            <path d="M262 740L385 825M262 770L380 790M275 810L400 780M350 820L410 740M375 825L430 745M180 1380L330 1350M250 1380L400 1440M300 1400L340 1500" stroke="#4f4f4f" stroke-width="3"/>
            <path d="M545 855L730 862M515 920L735 925M505 985L740 990M515 1045L780 1045M575 1170L770 1160M690 1270L780 1265M590 860L560 980M660 1050L650 1165M535 1050L520 1110M665 620Q700 610 705 680L740 900" stroke="#4b4b4b" stroke-width="4"/>
            <path d="M840-20L990-20V50L855 140 735-20z" fill="#494949"/>
            <path d="M775 0L850 50 845 100 835 110 780 45z" fill="#3f3f3f"/>
            <path d="M855 145L990 60V1250L835 1050 780 900 712 560 735 400z" fill="#4b4b4b"/>
            <path d="M860 1110L990 1270V1350L855 1405Q805 1290 805 1210 810 1140 840 1110z" fill="#4b4b4b"/>
            <path d="M735-5L862 140M1000 30Q900 80 855 160 780 250 738 340 705 450 708 560L740 720 768 860 785 1010 850 1085 1000 1245" stroke="#6f6f6f" stroke-width="22"/>
            <path d="M1000 62Q900 115 868 180 765 320 740 410 718 500 724 580L785 900 815 1010" stroke="#383838" stroke-width="8"/>
            <path d="M835 1105Q790 1140 790 1220 795 1290 845 1410L905 1586M775 1445L1000 1350" stroke="#6d6d6d" stroke-width="17"/>
            <path d="M870 185L990 330M755 440L990 405M745 660L990 590M780 720L990 655M800 805L990 740M810 932L990 880M820 1025L895 1005 935 1165M915 1030L990 1010M870 1420L930 1545 990 1500M930 1165L990 1240" stroke="#383838" stroke-width="5"/>
            <path d="M900 170L990 260M930 140L990 200M750 500L990 470M745 560L990 520M750 600L990 560M760 690L990 620M790 770L990 700M800 850L990 790M805 890L990 830" stroke="#424242" stroke-width="4"/>
            <path d="M8 432L42 426 66 500 22 503z" fill="#919191"/>
            <path d="M818 1042h15v22l32 40-6 12-30-36zM882 1138l16 8-6 14zM355 1290l10 0v70l-8-5z" fill="#777"/>
          </g>
          <path d="M574 600l22-8h400v90H574z" fill="#4b4b4b"/>
          <path d="M574 630l35-12 80 35 6 20H574z" fill="#565656"/>
          <path d="M985 153h20v525h-20z" fill="#444"/>
          <path d="M604 600l16 10 75 34q10 12 20 14 60 6 100 12 50-14 70-12 40-6 60 8M952 615v40l-12 18M658 640l-25 30" stroke="#6c6c6c" stroke-width="8"/>
          <path d="M624 638q12-2 14 12" stroke="#727272" stroke-width="2.500"/>
          <path d="M591 647l35-42M591 647l35 26M608 662l22 12M650 655l-28 20M575 662l40-40" stroke="#3d3d3d" stroke-width="1.500"/>
          <path d="M610 165q-18 10-25 20M600 153l40 26M650 153l18 26M700 165l70 14M750 153l50 26M775 153l5 26M820 179l30-26M900 153l25 26M940 160l-30 19M620 612l75 38 45-42M706 645l60-32M710 648q20-20 22-18 30 12 28 30M779 634l53-12 42-8 44 10 10 30-146 20zM833 624l12 40M985 210l10 30M985 330l10 35M985 510q14 35 2 60M860 615l4 30M890 615l4 40" stroke="#363636" stroke-width="1.300"/>
          <path d="M935 621h17v16h-17zM725 642l12 4 2 8-10 2z" fill="#666"/>
        </g>
        <path d="M256 482L333 674H256z" fill="#fff"/>
        <path d="M496.700 153l45 51.300-43.400 62-11.600 68.700 14 69 14.300 83.300 12.700 25 51.600 61 31.400 38 6 6 73.300 33.400 5 15.300 72 8M823 674l62-9 60 9" fill="none" stroke="#b41e12" stroke-width="1.300"/>
        <path d="M419.500 153l1.500 8 14 56-.5 19-13 154-9.200 115v6l6.700 11 96 144.700 4.500 7.300" fill="none" stroke="#0b4fd0" stroke-width="2.400"/>
        <g fill="#bccd4d" stroke="#3c4220" stroke-width=".9"><circle cx="421" cy="161" r="3"/><circle cx="426" cy="180" r="3"/><circle cx="430.500" cy="198" r="3"/><circle cx="435.300" cy="217" r="3"/><circle cx="434.500" cy="236" r="3"/><circle cx="433.300" cy="255.500" r="3"/><circle cx="430" cy="294" r="3"/><circle cx="428.500" cy="313" r="3"/><circle cx="425" cy="351.500" r="3"/><circle cx="421.700" cy="390" r="3"/><circle cx="420.400" cy="409" r="3"/><circle cx="418.400" cy="428" r="3"/><circle cx="417" cy="447.500" r="3"/><circle cx="415.700" cy="466.500" r="3"/><circle cx="414.300" cy="485.500" r="3"/><circle cx="412.300" cy="505" r="3"/><circle cx="419" cy="522" r="3"/><circle cx="430" cy="538" r="3"/><circle cx="440.700" cy="554.500" r="3"/><circle cx="450.700" cy="570" r="3"/><circle cx="461.700" cy="586" r="3"/><circle cx="472.300" cy="602" r="3"/><circle cx="482.700" cy="618.500" r="3"/><circle cx="493.300" cy="634.700" r="3"/><circle cx="504.300" cy="650.500" r="3"/><circle cx="515" cy="666.700" r="3"/><circle cx="536" cy="286" r="3"/><circle cx="574" cy="332" r="3"/></g>
        <g fill="#e05b8b" stroke="#6a2c45" stroke-width=".8"><circle cx="431.300" cy="274.500" r="3"/><circle cx="426.500" cy="332" r="3"/><circle cx="423.200" cy="370.500" r="3"/></g>
        <path d="M412.300 508l3 3-3 3-3-3z" fill="#123a80" stroke="#0a1d3c"/>
        <circle cx="521" cy="371" r="3" fill="#f7dc1c" stroke="#b58b0a"/><path d="M519 369l4 4M523 369l-4 4" stroke="#d8590c"/>
      </svg>
    </div>

    <aside class="right">
      <h2>Identify Results<svg><use href="#flt"/></svg><svg><use href="#cls"/></svg></h2>
      <div class="mini"><svg><use href="#form"/></svg><i></i><svg><use href="#exp"/></svg><svg><use href="#col"/></svg><svg><use href="#ynew"/></svg><i></i><svg><use href="#desel"/></svg><i></i><svg class="pale"><use href="#copy"/></svg><svg><use href="#print"/></svg><svg><use href="#info"/></svg><svg class="s"><use href="#dn"/></svg></div>
      <div class="results">
        <div class="hd"><span>Feature</span><span>Value</span></div>
        <div class="ir"><span class="p0"><svg><use href="#dn"/></svg>0</span><span>dem_Nissewaard</span></div>
        <div class="ir alt"><span class="p1"><svg><use href="#dn"/></svg>dem_Nissewaard</span></div>
        <div class="ir"><span class="p2"><svg></svg>Band 1</span><span>-1.168</span></div>
        <div class="ir hov"><span class="p2"><svg><use href="#rt"/></svg>(Derived)</span></div>
      </div>
      <div class="opt mode"><span>Mode</span><div class="combo w109">Layer selection<svg><use href="#dn"/></svg></div><svg class="ck"><use href="#chk"/></svg><span class="aof">Auto open form</span></div>
      <div class="opt view"><span>View</span><div class="combo w50">Tree<svg><use href="#dn"/></svg></div><div class="btn hlp">Help</div></div>
      <div class="dots r3">······</div>
      <h2 class="d3">3Di<svg><use href="#flt"/></svg><svg><use href="#cls"/></svg></h2>
      <div class="cmdtab">Commands</div>
      <div class="cmdpane"><div class="cmds">
        <div class="k"><svg class="a"><use href="#rt"/></svg><svg class="g"><use href="#tbox"/></svg>Step 1 - Check data</div>
        <div class="k"><svg class="a"><use href="#rt"/></svg><svg class="g"><use href="#tbox"/></svg>Step 2 - Convert and import data</div>
        <div class="k"><svg class="a"><use href="#dn"/></svg><svg class="g"><use href="#tbox"/></svg>Step 3 - Modify schematisation</div>
        <div class="k sub"><svg class="g"><use href="#hammer"/></svg>control structures</div>
        <div class="k sub"><svg class="g"><use href="#hammer"/></svg>guess indicators</div>
        <div class="k sub"><svg class="g"><use href="#hammer"/></svg>create breach locations</div>
        <div class="k sub"><svg class="g"><use href="#hammer"/></svg>add connected points</div>
        <div class="k sub hov"><svg class="g"><use href="#hammerb"/></svg>predict calc points</div>
        <div class="k"><i class="a"></i><svg class="g"><use href="#tbox"/></svg>Step 4 - Convert schematisation</div>
        <div class="k"><i class="a"></i><svg class="g"><use href="#tbox"/></svg>Step 5 - Post-process results</div>
      </div></div>
    </aside>
  </main>

  <footer class="status">
    <div class="field locate"><svg viewBox="0 0 10 10"><circle cx="4" cy="4" r="3" fill="none" stroke="#888"/><path d="M6 6l3 3" stroke="#888" stroke-width="1.300"/></svg>Type to locate (Ctrl+K)</div>
    <span class="msg">Validation finished (0 error(s) found).</span>
    <span class="st-c">Coordinate</span><div class="field coord">77090,428398</div>
    <svg class="mouse" viewBox="0 0 14 14"><path d="M3 2l8 10M5 1l7 7M1 5l8 8M8 5l4-3" stroke="#222" stroke-width="1.200"/><circle cx="4" cy="4.500" r="2.500" fill="none" stroke="#222"/><circle cx="9.500" cy="9.500" r="2.500" fill="none" stroke="#222"/></svg>
    <span class="st-s">Scale</span><div class="combo w62">1:8307<svg><use href="#dn"/></svg></div>
    <svg class="lock" viewBox="0 0 12 14"><path d="M3 7V4a3 3 0 0 1 6 0v3" fill="none" stroke="#999" stroke-width="1.500"/><path d="M1 7h10v6H1z" fill="#666"/></svg>
    <span class="st-m">Magnifier</span><div class="spin w62">100%<b><svg><use href="#up"/></svg><svg><use href="#dn"/></svg></b></div>
    <span class="st-r">Rotation</span><div class="spin w59">0.0 °<b><svg><use href="#up"/></svg><svg><use href="#dn"/></svg></b></div>
    <svg class="ck"><use href="#chk"/></svg><span class="st-n">Render</span>
    <svg class="earth" viewBox="0 0 14 12"><ellipse cx="7" cy="6" rx="6" ry="5" fill="#777"/><path d="M1 6h12M2.500 3h9M2.500 9h9M7 1v10M4 2q-2 4 0 8M10 2q2 4 0 8" stroke="#ddd" stroke-width=".6" fill="none"/></svg><span class="st-e">EPSG:28992</span>
    <svg class="chat" viewBox="0 0 14 12"><path d="M7 0c9 0 9 10 0 10l-2 2-1-2.500C-2 7-1 0 7 0z" fill="#555"/><path d="M3 5h1.500M6.500 5H8M10 5h1.500" stroke="#fff" stroke-width="1.500"/></svg>
  </footer>

  <section class="dialog">
    <div class="dtitle"><svg class="logo"><use href="#qgis"/></svg><span>v2_connected_pnt - Feature Attributes</span><svg class="x" viewBox="0 0 10 10"><path d="M1 1l8 8M9 1L1 9" stroke="#333"/></svg></div>
    <div class="dmenu"><u>A</u>ctions</div>
    <div class="form">
      <label>exchange_level</label><div class="field">3<svg><use href="#bksp"/></svg></div><svg class="w"><use href="#wred"/></svg>
      <label>id</label><div class="field">64<svg><use href="#bksp"/></svg></div><svg class="w"><use href="#wgreen"/></svg>
      <label>calculation_pnt_id</label><div class="field">65<svg><use href="#bksp"/></svg></div><svg class="w"><use href="#wgreen"/></svg>
      <label>levee_id</label><div class="field focus">1<svg><use href="#bksp"/></svg></div><svg class="w"><use href="#wred"/></svg>
    </div>
    <div class="dbtns"><div class="btn ok">OK</div><div class="btn">Cancel</div></div>
  </section>

  <svg class="notes" viewBox="0 0 1294 695">
    <g fill="none" stroke="#f00" stroke-width="4">
      <path d="M2 204.300h234v12H2z"/>
      <path d="M181 67.300h29.300v19.700H181zM254 67.300h25.500v19.700H254zM285 67.300h25v19.700h-25zM863 585h59v19.300h-59z"/>
      <path d="M211.500 87.500L237 121M278 88l29 36M311 76l84 33M238 211l61 27M780 561l82 33"/>
    </g>
    <g fill="#fff" stroke="#f00" stroke-width="4"><path d="M299.300 217h39.500v44.700h-39.500zM220.500 121h40.200v45.500h-40.200zM299.500 123.700h39.300v44.700h-39.300zM395.300 97.500h40v45.200h-40zM739 515h39.700v44.700H739z"/></g>
    <g class="num"><text x="320.500" y="247">1</text><text x="242" y="151.500">2</text><text x="320" y="154">3</text><text x="415.500" y="130.500">4</text><text x="760" y="544.500">4</text></g>
  </svg>
</div>
</body>
</html>
```
FILE: styles.css
```css
* { box-sizing: border-box; }
body { margin: 0; background: #efefef; color: #222; font: 10px/14px "Open Sans", "Noto Sans", sans-serif; }
svg { display: block; flex: none; }
u { text-underline-offset: 1px; text-decoration-thickness: 1px; }
.sprite { position: absolute; width: 0; height: 0; }
.app { position: relative; width: 1294px; height: 695px; overflow: hidden; display: flex; flex-direction: column; white-space: nowrap; }

.titlebar { height: 19px; flex: none; background: #fff; display: flex; align-items: center; padding-left: 3px; color: #888; }
.logo { width: 13px; height: 13px; }
.title { margin-left: 5px; font-size: 10px; letter-spacing: -.25px; }
.winctl { width: 100px; height: 20px; margin-left: auto; margin-right: 9px; }
.menubar { height: 18px; flex: none; display: flex; align-items: center; gap: 9.900px; padding-left: 9px; color: #8c8c8c; letter-spacing: -.19px; }

.toolbar { flex: none; display: flex; align-items: center; background: linear-gradient(#fafafa, #eee); border-bottom: 1px solid #c4c4c4; }
.t1 { height: 26px; padding: 0 0 1px 11px; }
.t2, .t3 { height: 26px; }
.t3 { height: 27px; }
.t4 { height: 37px; font: 8.500px "DejaVu Sans Condensed", sans-serif; }
.i { width: 22.300px; height: 18px; padding: 0 2.150px; }
.i.on { background: #dcdcdc; }
.dd { width: 10.200px; height: 8px; }
.grip { width: 12px; height: 13px; padding: 0 4.500px; flex: none; background: radial-gradient(circle, #bbb 35%, transparent 40%) center / 3px 3px; background-clip: content-box; }
.sep { width: 5.600px; height: 22px; flex: none; background: linear-gradient(#d5d5d5, #d5d5d5) center / 1px 100% no-repeat; }

.combo, .spin, .field, .btn { height: 16px; border: 1px solid #bfbfbf; border-radius: 2px; display: flex; align-items: center; flex: none; color: #222; font: 9px "DejaVu Sans Condensed", sans-serif; letter-spacing: -.15px; }
.combo { background: linear-gradient(#fff, #f1f1f1); padding-left: 4px; }
.combo svg { width: 8px; height: 8px; margin-left: auto; margin-right: 5px; }
.spin, .field { background: #fff; padding-left: 4px; }
.spin b { margin-left: auto; width: 9px; height: 100%; border-left: 1px solid #ccc; background: #f4f4f4; display: flex; flex-direction: column; align-items: center; justify-content: center; gap: 1px; }
.spin b svg { width: 6px; height: 5px; }
.dim { color: #777; background: #f1f1f1; }
.w60 { width: 60px; margin-right: 2px; }
.w68 { width: 68px; margin-right: 2px; }
.w109 { width: 109px; }
.w50 { width: 50px; }
.w62 { width: 62px; }
.w59 { width: 59px; }
.t4 .pdok { width: 74px; padding-left: 2px; color: #666; letter-spacing: -.1px; }
.gap22 { width: 22px; }
.gap28 { width: 27px; }
.gap44 { width: 44px; }
.anim { width: 58px; height: 17px; margin: 0 5px 0 41px; border: 1px solid #bbb; border-radius: 2px; background: #f8f8f8; display: flex; align-items: center; justify-content: flex-end; padding-right: 3px; letter-spacing: -.1px; }
.c50 { width: 51px; margin-right: 5px; }
.slider { width: 56px; height: 12px; margin: 0 2px 0 3px; background: linear-gradient(#ccc, #ccc) center / 100% 2px no-repeat; }
.slider i { display: block; width: 11px; height: 11px; border: 1px solid #bbb; border-radius: 2px; background: #fff; }
.lcd { width: 67px; height: 32px; border: 1px solid #aaa; display: flex; align-items: center; justify-content: flex-end; padding-right: 3px; margin-right: 2px; }
.lcd i { width: 6px; height: 12px; border: 1px dashed #aaa; }
.bigx { font: 14px "Open Sans", sans-serif; margin-left: 4px; background: #fff; color: #222; }

.work { flex: 1; min-height: 0; display: flex; }
h2 { margin: 0; font: inherit; font-size: 10px; display: flex; align-items: center; letter-spacing: -.1px; }
h2 svg { width: 8px; height: 8px; margin-left: 2px; }
h2 svg:first-of-type { margin-left: auto; }
.left { width: 252px; flex: none; display: flex; flex-direction: column; padding-left: 3px; }
.left h2 { height: 14px; padding-left: 2px; flex: none; }
.mini { height: 19px; flex: none; display: flex; align-items: center; gap: 5.200px; padding-left: 4px; }
.mini svg { width: 11.500px; height: 11.500px; }
.mini svg.s { width: 7px; height: 8px; margin: 0 -2px; }
.mini i { width: 1px; height: 13px; background: #d5d5d5; margin: 0 -.5px; }
.mini .pale { opacity: .35; }
.tree { height: 329px; margin-top: .5px; width: 249px; flex: none; border: 1px solid #c6c6c6; background: #fff; display: flex; }
.rows { width: 236px; overflow: hidden; border-right: 3px dashed #e2e2e2; }
.r { height: 14.860px; display: flex; align-items: center; font-size: 10px; letter-spacing: -.18px; color: #333; }
.r b { font-weight: 700; color: #000; letter-spacing: -.22px; }
.cur { background: #efefef; }
.l1 { padding-left: 17px; } .l2 { padding-left: 34px; } .l3 { padding-left: 51px; } .l4 { padding-left: 68px; }
.a { width: 14px; height: 8px; flex: none; }
.c { width: 18px; height: 12px; }
.t { width: 19px; height: 13px; margin-right: 2px; }
.g { width: 14px; height: 13px; margin-right: 5px; }
.l1 .g { margin-right: 3px; }
.l2 .g { margin-right: 4px; }
.l3 .g { margin-right: 4px; }
.l3.near .g { margin-left: -2px; margin-right: 2px; }
.l4 .g { width: 20px; margin-right: 4px; }
.vscroll { width: 11px; border-left: 1px solid #ccc; background: #f0f0f0; display: flex; flex-direction: column; align-items: center; }
.vscroll svg { width: 9px; height: 8px; margin: 1px 0; }
.vscroll i { width: 11px; height: 87px; background: #fcfcfc; border: 1px solid #ccc; margin-bottom: auto; }
.hscroll { height: 12px; width: 249px; border: 1px solid #c6c6c6; border-top: 0; display: flex; align-items: center; flex: none; background: #f0f0f0; }
.hscroll svg { width: 10px; height: 8px; }
.hscroll i { width: 192px; height: 100%; background: #fcfcfc; border: 1px solid #ccc; border-width: 0 1px; margin-right: auto; }
.hscroll s { width: 12px; }
.flip { transform: scaleX(-1); }
.tabs { display: flex; height: 19px; flex: none; font: 9px "DejaVu Sans Condensed", sans-serif; letter-spacing: -.05px; color: #333; }
.tabs span { display: flex; align-items: center; justify-content: center; height: 18px; margin-top: 1px; background: #dcdcdc; border: 1px solid #c4c4c4; }
.tabs .sel { background: #f9f9f9; height: 19px; margin-top: 0; }
.t-a { width: 61px; } .t-b { width: 46px; } .t-c { width: 52px; }
.dots { height: 6px; font-size: 8px; line-height: 6px; color: #999; text-align: center; flex: none; letter-spacing: 0; }
.left .ve { height: 16px; padding-right: 1px; font-size: 10.300px; }
.vtext { font: 8.600px/10.800px "DejaVu Sans Condensed", sans-serif; text-align: center; padding-top: 24px; letter-spacing: -.05px; width: 249px; color: #222; }
.vtext p { margin: 0 0 11px; }

.map { width: 741px; flex: none; border: 1px solid #aaa; margin-left: 3px; background: #fff; }
.terrain { width: 739px; height: 521px; margin-top: -1px; }

.right { flex: 1; min-width: 0; padding-left: 5px; display: flex; flex-direction: column; overflow: hidden; }
.right h2 { height: 14px; flex: none; padding-left: 2px; width: 299px; }
.right .mini { padding-left: 4px; gap: 5px; }
.results { height: 177px; flex: none; border: 1px solid #c2c2c2; background: #fff; font-size: 9.800px; letter-spacing: -.18px; color: #333; margin-top: .5px; }
.hd { height: 16px; display: flex; align-items: center; background: linear-gradient(#fff, #ececec); border-bottom: 1px solid #ccc; }
.hd span:first-child { width: 118px; border-right: 1px solid #ccc; padding-left: 1px; height: 100%; display: flex; align-items: center; }
.hd span + span { padding-left: 2px; }
.ir { height: 13.500px; display: flex; align-items: center; }
.ir > span:first-child { width: 120px; display: flex; align-items: center; flex: none; }
.ir svg { width: 8px; height: 8px; margin-right: 7px; }
.p0 { padding-left: 4px; } .p1 { padding-left: 20px; } .p2 { padding-left: 37px; }
.alt { background: #f1f1f1; } .hov { background: #e9e7e3; }
.opt { display: flex; align-items: center; flex: none; height: 21px; font: 8.800px "DejaVu Sans Condensed", sans-serif; letter-spacing: -.1px; padding-left: 3px; gap: 4px; }
.opt > span { width: 21px; flex: none; }
.opt.view > span { width: 19px; }
.opt .aof { width: auto; }
.mode { margin-top: 1px; }
.ck { width: 12px; height: 12px; }
.opt .ck { margin-left: 74px; }
.btn { justify-content: center; background: linear-gradient(#fff, #f0f0f0); }
.hlp { width: 34px; margin-left: 188px; justify-content: flex-start; padding-left: 4px; }
.r3 { margin-top: 2px; height: 5px; }
.right .d3 { height: 13px; }
.cmdtab { width: 63px; height: 20px; flex: none; border: 1px solid #c4c4c4; border-bottom: 0; background: #fcfcfc; display: flex; align-items: center; justify-content: center; font: 8.800px "DejaVu Sans Condensed", sans-serif; letter-spacing: -.1px; position: relative; margin-bottom: -1px; }
.cmdpane { flex: 1; border: 1px solid #c4c4c4; background: #fafafa; padding: 8px 2px 7px 7px; margin-bottom: 2px; }
.cmds { height: 100%; border: 1px solid #b9b9b9; background: #fff; padding-top: 1px; }
.k { height: 14.860px; display: flex; align-items: center; font-size: 10.200px; letter-spacing: -.21px; color: #333; }
.k .a { width: 16px; }
.k .g { width: 12px; height: 12px; margin-right: 3px; margin-left: 2px; }
.k.sub { padding-left: 32px; }
.k.sub .g { margin-right: 4px; }
.k.hov { background: #efefef; }

.status { height: 21px; flex: none; display: flex; align-items: center; font: 9px "DejaVu Sans Condensed", sans-serif; letter-spacing: -.13px; padding: 2px 0 0 5px; }
.status > * { flex: none; }
.locate { width: 158px; color: #888; gap: 6px; letter-spacing: -.05px; }
.locate svg { width: 9px; height: 9px; }
.msg { margin-left: 5px; width: 519px; }
.st-c { width: 44px; } .coord { width: 74px; padding-left: 8px; }
.mouse { width: 14px; height: 14px; margin: 0 8px 0 2px; }
.st-s { width: 23px; }
.lock { width: 12px; height: 13px; margin: 0 6px 0 8px; }
.st-m { width: 38px; } .st-r { width: 38px; margin-left: 7px; }
.status .ck { margin: 0 4px 0 5px; }
.st-n { width: 39px; }
.earth { width: 14px; height: 12px; margin-right: 2px; }
.st-e { width: 62px; }
.chat { width: 14px; height: 12px; }

.dialog { position: absolute; left: 579px; top: 178px; width: 407px; height: 433px; background: #efefef; border: 1px solid #555; box-shadow: 0 2px 8px rgba(0, 0, 0, .6); display: flex; flex-direction: column; }
.dtitle { height: 25px; background: #fff; display: flex; align-items: center; padding: 0 9px 0 6px; }
.dtitle span { margin-left: 3px; font-size: 10px; color: #222; letter-spacing: -.22px; }
.dtitle .x { width: 10px; height: 10px; margin-left: auto; }
.dmenu { height: 17px; border-bottom: 1px solid #ddd; padding: 1px 0 0 7px; font-size: 10px; color: #333; letter-spacing: -.1px; }
.form { display: grid; grid-template-columns: 74px 268px 18px; row-gap: 5.700px; grid-auto-rows: 18px; align-items: center; padding: 15.500px 0 0 14px; font: 8.800px "DejaVu Sans Condensed", sans-serif; }
.form label { letter-spacing: -.12px; }
.form .field { padding-left: 1px; }
.form .field svg { width: 9px; height: 7px; margin-left: auto; margin-right: 5px; }
.form .focus { border-color: #63b0ee; }
.w { width: 17px; height: 17px; margin-left: 7px; }
.dbtns { margin-top: auto; display: flex; justify-content: flex-end; gap: 3px; padding: 0 7px 7px 0; }
.dbtns .btn { width: 54px; height: 17px; }
.dbtns .ok { width: 58px; border-color: #63a8e0; background: linear-gradient(#fff, #e4e8ec); }

.notes { position: absolute; left: 0; top: 0; width: 1294px; height: 695px; pointer-events: none; }
.num { font: 22.500px Lato, sans-serif; text-anchor: middle; fill: #000; }
```
